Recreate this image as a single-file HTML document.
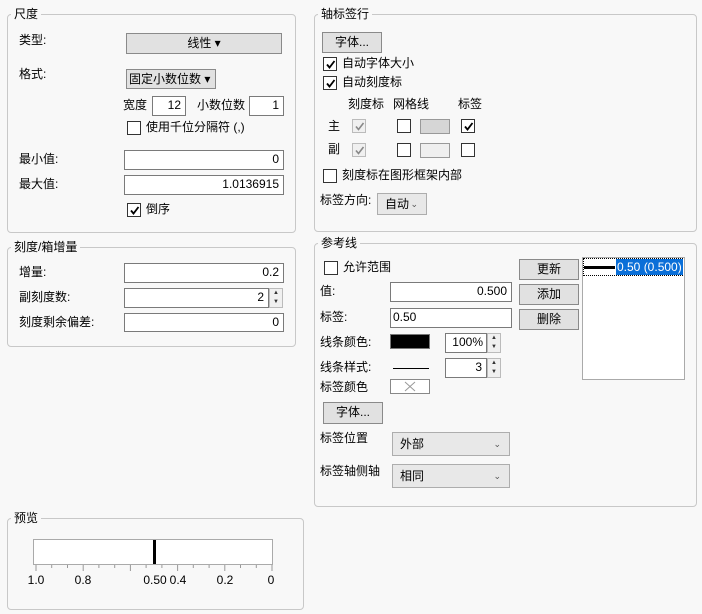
<!DOCTYPE html>
<html><head><meta charset="utf-8"><style>
*{box-sizing:border-box}
body{margin:0;width:702px;height:614px;background:#f8f8f8;font-family:"Liberation Sans","Noto Sans CJK SC",sans-serif;font-size:12px;color:#000;position:relative;overflow:hidden}
.a{position:absolute;white-space:nowrap;line-height:14px}
.p{position:absolute;border:1px solid #c8c8c8;border-radius:4px}
.lg{position:absolute;background:#f8f8f8;padding:0 3px;line-height:14px;font-size:12px}
.in{position:absolute;background:#fff;border:1px solid #7a7a7a;text-align:right;padding:0 4px;line-height:17px}
.bt{position:absolute;background:#e1e1e1;border:1px solid #8a8a8a;text-align:center;line-height:18px}
.cb{position:absolute;width:14px;height:14px;background:#fff;border:1px solid #333}
.cb.d{border-color:#bbb;background:#f0f0f0}
.cb svg{position:absolute;left:1px;top:1px}
.dd{position:absolute;background:#e8e8e8;border:1px solid #adadad;padding-left:7px;line-height:20px}
.dd .c{position:absolute;right:8px;top:0;font-size:9px;color:#555}
.sp{position:absolute;width:14px;background:#f0f0f0;border:1px solid #bbb}
.sp div{height:50%;font-size:6px;line-height:8px;text-align:center;color:#333}
</style></head><body>
<!-- panels -->
<div class="p" style="left:7px;top:14px;width:289px;height:219px"></div><div class="lg" style="left:11px;top:7px">尺度</div>
<div class="p" style="left:314px;top:14px;width:383px;height:218px"></div><div class="lg" style="left:318px;top:7px">轴标签行</div>
<div class="p" style="left:7px;top:247px;width:289px;height:100px"></div><div class="lg" style="left:11px;top:240px">刻度/箱增量</div>
<div class="p" style="left:314px;top:243px;width:383px;height:264px"></div><div class="lg" style="left:318px;top:236px">参考线</div>
<div class="p" style="left:7px;top:518px;width:297px;height:92px"></div><div class="lg" style="left:11px;top:511px">预览</div>

<!-- panel 1 -->
<div class="a" style="left:19px;top:33px">类型:</div>
<div class="bt" style="left:126px;top:33px;width:156px;height:21px">线性 ▾</div>
<div class="a" style="left:19px;top:67px">格式:</div>
<div class="bt" style="left:126px;top:69px;width:90px;height:20px;text-align:left;padding-left:2px">固定小数位数 ▾</div>
<div class="a" style="left:123px;top:98px">宽度</div>
<div class="in" style="left:152px;top:96px;width:34px;height:20px">12</div>
<div class="a" style="left:197px;top:98px">小数位数</div>
<div class="in" style="left:249px;top:96px;width:35px;height:20px">1</div>
<div class="cb" style="left:127px;top:121px"></div><div class="a" style="left:146px;top:120px">使用千位分隔符 (,)</div>
<div class="a" style="left:19px;top:152px">最小值:</div>
<div class="in" style="left:124px;top:150px;width:160px;height:20px">0</div>
<div class="a" style="left:19px;top:177px">最大值:</div>
<div class="in" style="left:124px;top:175px;width:160px;height:20px">1.0136915</div>
<div class="cb" style="left:127px;top:203px"><svg width="11" height="11"><path d="M2 5.5L4.5 8.5L9.5 2" stroke="#000" stroke-width="1.8" fill="none"/></svg></div><div class="a" style="left:146px;top:202px">倒序</div>

<!-- panel 3 -->
<div class="a" style="left:19px;top:265px">增量:</div>
<div class="in" style="left:124px;top:263px;width:160px;height:20px">0.2</div>
<div class="a" style="left:19px;top:290px">副刻度数:</div>
<div class="in" style="left:124px;top:288px;width:145px;height:20px">2</div>
<div class="sp" style="left:269px;top:288px;height:20px"><div>▲</div><div>▼</div></div>
<div class="a" style="left:19px;top:315px">刻度剩余偏差:</div>
<div class="in" style="left:124px;top:313px;width:160px;height:19px">0</div>

<!-- panel 2 -->
<div class="bt" style="left:322px;top:32px;width:60px;height:21px">字体...</div>
<div class="cb" style="left:323px;top:57px"><svg width="11" height="11"><path d="M2 5.5L4.5 8.5L9.5 2" stroke="#000" stroke-width="1.8" fill="none"/></svg></div><div class="a" style="left:342px;top:56px">自动字体大小</div>
<div class="cb" style="left:323px;top:76px"><svg width="11" height="11"><path d="M2 5.5L4.5 8.5L9.5 2" stroke="#000" stroke-width="1.8" fill="none"/></svg></div><div class="a" style="left:342px;top:75px">自动刻度标</div>
<div class="a" style="left:348px;top:97px">刻度标</div>
<div class="a" style="left:393px;top:97px">网格线</div>
<div class="a" style="left:458px;top:97px">标签</div>
<div class="a" style="left:328px;top:119px">主</div>
<div class="cb d" style="left:352px;top:119px"><svg width="11" height="11"><path d="M2 5.5L4.5 8.5L9.5 2" stroke="#888" stroke-width="1.6" fill="none"/></svg></div>
<div class="cb" style="left:397px;top:119px"></div>
<div style="position:absolute;left:420px;top:119px;width:30px;height:15px;background:#d6d6d6;border:1px solid #999"></div>
<div class="cb" style="left:461px;top:119px"><svg width="11" height="11"><path d="M2 5.5L4.5 8.5L9.5 2" stroke="#000" stroke-width="1.8" fill="none"/></svg></div>
<div class="a" style="left:328px;top:142px">副</div>
<div class="cb d" style="left:352px;top:143px"><svg width="11" height="11"><path d="M2 5.5L4.5 8.5L9.5 2" stroke="#888" stroke-width="1.6" fill="none"/></svg></div>
<div class="cb" style="left:397px;top:143px"></div>
<div style="position:absolute;left:420px;top:143px;width:30px;height:15px;background:#efefef;border:1px solid #999"></div>
<div class="cb" style="left:461px;top:143px"></div>
<div class="cb" style="left:323px;top:169px"></div><div class="a" style="left:342px;top:168px">刻度标在图形框架内部</div>
<div class="a" style="left:320px;top:193px">标签方向:</div>
<div class="dd" style="left:377px;top:193px;width:50px;height:22px">自动<span class="c">⌄</span></div>

<!-- panel 4 -->
<div class="cb" style="left:324px;top:261px"></div><div class="a" style="left:343px;top:260px">允许范围</div>
<div class="a" style="left:320px;top:284px">值:</div>
<div class="in" style="left:390px;top:282px;width:122px;height:20px">0.500</div>
<div class="a" style="left:320px;top:310px">标签:</div>
<div class="in" style="left:390px;top:308px;width:122px;height:20px;text-align:left;padding-left:2px">0.50</div>
<div class="a" style="left:320px;top:335px">线条颜色:</div>
<div style="position:absolute;left:390px;top:334px;width:40px;height:15px;background:#000;border:1px solid #777"></div>
<div class="in" style="left:445px;top:333px;width:42px;height:20px;padding:0 3px">100%</div>
<div class="sp" style="left:487px;top:333px;height:20px"><div>▲</div><div>▼</div></div>
<div class="a" style="left:320px;top:360px">线条样式:</div>
<div style="position:absolute;left:393px;top:368px;width:36px;height:1px;background:#000"></div>
<div class="in" style="left:445px;top:358px;width:42px;height:20px">3</div>
<div class="sp" style="left:487px;top:358px;height:20px"><div>▲</div><div>▼</div></div>
<div class="a" style="left:320px;top:380px">标签颜色</div>
<div style="position:absolute;left:390px;top:379px;width:40px;height:15px;background:#fff;border:1px solid #888"><svg width="38" height="13" style="position:absolute;left:0;top:0"><path d="M14 2L24 11M24 2L14 11" stroke="#999" stroke-width="1"/></svg></div>
<div class="bt" style="left:323px;top:402px;width:60px;height:22px">字体...</div>
<div class="a" style="left:320px;top:431px">标签位置</div>
<div class="dd" style="left:392px;top:432px;width:118px;height:24px;line-height:22px">外部<span class="c">⌄</span></div>
<div class="a" style="left:320px;top:464px">标签轴侧轴</div>
<div class="dd" style="left:392px;top:464px;width:118px;height:24px;line-height:22px">相同<span class="c">⌄</span></div>
<div class="bt" style="left:519px;top:259px;width:60px;height:21px">更新</div>
<div class="bt" style="left:519px;top:284px;width:60px;height:21px">添加</div>
<div class="bt" style="left:519px;top:309px;width:60px;height:21px">删除</div>
<div style="position:absolute;left:582px;top:257px;width:103px;height:123px;background:#fff;border:1px solid #aaa"></div>
<div style="position:absolute;left:583px;top:258px;width:100px;height:18px;border:1px dotted #000"></div>
<div style="position:absolute;left:584px;top:266px;width:31px;height:3px;background:#000"></div>
<div class="a" style="left:616px;top:259px;width:67px;height:16px;background:#0a6fd8;color:#fff;line-height:16px;padding-left:1px">0.50 (0.500)</div>

<!-- preview -->
<svg style="position:absolute;left:0;top:0" width="310" height="614">
<rect x="33.5" y="539.5" width="239" height="25" fill="#fff" stroke="#aaa"/>
<g stroke="#999">
<path d="M36 565v6M83.2 565v6M130.4 565v6M177.6 565v6M224.8 565v6M272 565v6"/>
<path d="M51.7 565v3M67.5 565v3M98.9 565v3M114.7 565v3M146.1 565v3M161.9 565v3M193.3 565v3M209.1 565v3M240.5 565v3M256.3 565v3"/>
</g>
<rect x="153" y="540" width="3" height="24" fill="#000"/>
<g font-size="12" fill="#000" text-anchor="middle" font-family="Liberation Sans,sans-serif">
<text x="36" y="584">1.0</text><text x="83" y="584">0.8</text><text x="155" y="584">0.50</text><text x="178" y="584">0.4</text><text x="225" y="584">0.2</text><text x="271" y="584">0</text>
</g>
</svg>
</body></html>
